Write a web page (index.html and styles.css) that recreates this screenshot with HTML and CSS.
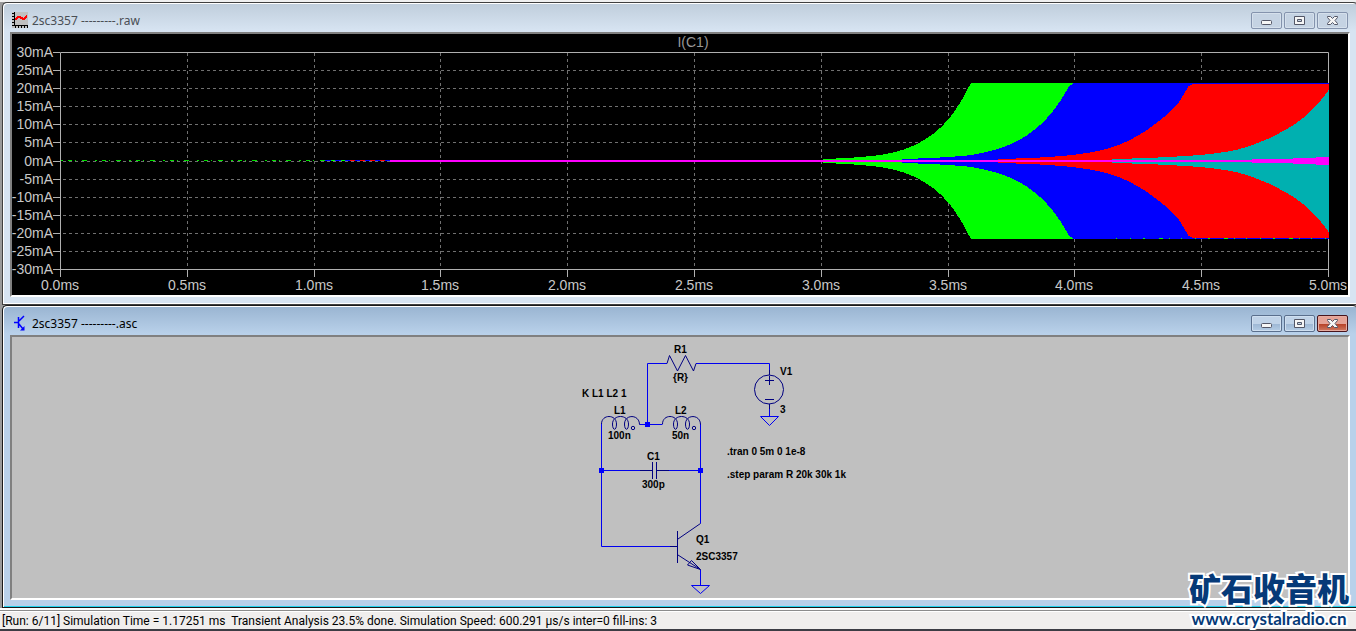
FILE: index.html
```html
<!DOCTYPE html>
<html lang="en">
<head>
<meta charset="utf-8">
<title>2sc3357</title>
<link rel="stylesheet" href="styles.css">
</head>
<body>
<main class="workspace">
  <section class="window window-inactive">
    <header class="titlebar">
      <svg class="doc-icon" width="16" height="16" viewBox="0 0 16 16" aria-hidden="true" shape-rendering="crispEdges">
        <rect width="16" height="16" fill="#c0c0c0"/>
        <path d="M2 0H3V14H2zM2 13H16V14H2zM0 1H2V2H0zM0 4H2V5H0zM0 7H2V8H0zM0 10H2V11H0zM0 13H2V14H0zM3 14H4V16H3zM6 14H7V16H6zM9 14H10V16H9zM12 14H13V16H12zM15 14H16V16H15z" fill="#000"/>
        <path d="M3 8L6 5H8L11 7H12L15 3.500" fill="none" stroke="#f00" stroke-width="2"/>
      </svg>
      <h1 class="title">2sc3357 ---------.raw</h1>
      <div class="controls">
        <button class="control" aria-label="Minimize"><svg width="13" height="11" viewBox="0 0 13 11"><rect x="1.500" y="5.500" width="10" height="4" rx="1" class="glyph"/></svg></button>
        <button class="control" aria-label="Maximize"><svg width="13" height="11" viewBox="0 0 13 11"><path fill-rule="evenodd" d="M1.500 1.500h10v8h-10zM4.500 4.500v2h4v-2z" class="glyph"/></svg></button>
        <button class="control" aria-label="Close"><svg width="13" height="11" viewBox="0 0 13 11"><path d="M1.500 1.500h3l2 2 2-2h3v1L9 5.500l2.500 3v1h-3l-2-2-2 2h-3v-1l2.500-3-2.500-3z" class="glyph"/></svg></button>
      </div>
    </header>
    <div class="viewport">
      <svg class="drawing plot" id="plot" viewBox="12 34 1336 261" role="img" aria-label="I(C1)">
        <g id="grid" class="grid"></g>
        <g id="axes" class="axes"></g>
        <g id="traces" shape-rendering="crispEdges"></g>
        <g id="labels" class="labels"><text x="693" y="47" text-anchor="middle" class="trace-name">I(C1)</text></g>
      </svg>
    </div>
  </section>

  <section class="window window-active">
    <header class="titlebar">
      <svg class="doc-icon" width="16" height="16" viewBox="0 0 16 16" aria-hidden="true">
        <path d="M2 7.500H6M6.500 2V13M7 6L12 1M7 9L11 14" fill="none" stroke="#00f" stroke-width="1.500"/>
        <path d="M12.500 11V15.500H8z" fill="#00f"/>
      </svg>
      <h1 class="title">2sc3357 ---------.asc</h1>
      <div class="controls">
        <button class="control" aria-label="Minimize"><svg width="13" height="11" viewBox="0 0 13 11"><rect x="1.500" y="5.500" width="10" height="4" rx="1" class="glyph"/></svg></button>
        <button class="control" aria-label="Maximize"><svg width="13" height="11" viewBox="0 0 13 11"><path fill-rule="evenodd" d="M1.500 1.500h10v8h-10zM4.500 4.500v2h4v-2z" class="glyph"/></svg></button>
        <button class="control control-close" aria-label="Close"><svg width="13" height="11" viewBox="0 0 13 11"><path d="M1.500 1.500h3l2 2 2-2h3v1L9 5.500l2.500 3v1h-3l-2-2-2 2h-3v-1l2.500-3-2.500-3z" class="glyph"/></svg></button>
      </div>
    </header>
    <div class="viewport">
      <svg class="drawing schematic" viewBox="12 337 1336 261" role="img" aria-label="Oscillator schematic">
        <g class="wire">
          <path d="M639.500 424.500H662.500M647.500 424.500V363.500H667M696 363.500H769.500V370M601.500 424V546.500H670M601.500 470.500H640M669 470.500H700.500M700.500 424V523.500M700.500 570V585.500M769.500 409V416.500"/>
          <path d="M760.500 416.500H778.500L769.500 425.500zM691.500 585.500H709.500L700.500 593.500z"/>
        </g>
        <path class="node" d="M645 422h5v5h-5zM599 468h5v5h-5zM698 468h5v5h-5z"/>
        <g class="part">
          <path d="M667 363.500L669.500 355.500L677.500 371L685.500 355.500L693.500 371L696 363.500"/>
          <path d="M601.500 424C601.500 414 616.500 414 616.500 424C616.500 431 612.500 431 612.500 424C612.500 414 628.500 414 628.500 424C628.500 431 624.500 431 624.500 424C624.500 414 639.500 414 639.500 424.500"/>
          <path d="M662.500 424C662.500 414 677.500 414 677.500 424C677.500 431 673.500 431 673.500 424C673.500 414 689.500 414 689.500 424C689.500 431 685.500 431 685.500 424C685.500 414 700.500 414 700.500 424.500"/>
          <circle cx="633" cy="428" r="1.700"/><circle cx="694" cy="428" r="1.700"/>
          <circle cx="769" cy="389.500" r="14.500"/>
          <path d="M769.500 370V375M765 380.500H774M769.500 376V385M765 399.500H774M769.500 404V409"/>
          <path d="M640 470.500H652M652.500 462V479M656.500 462V479M657 470.500H669"/>
          <path d="M670 546.500H677M677.500 531V563M678 539L700.500 523.500M678 555L700.500 569.500L687.500 565L691.500 560.500L700.500 569.500"/>
        </g>
        <g class="notes">
          <text x="674" y="353">R1</text><text x="673" y="381">{R}</text>
          <text x="582" y="397">K L1 L2 1</text>
          <text x="614" y="414">L1</text><text x="608" y="439">100n</text>
          <text x="675" y="414">L2</text><text x="672" y="439">50n</text>
          <text x="780" y="375">V1</text><text x="780" y="413">3</text>
          <text x="647" y="460">C1</text><text x="642" y="488">300p</text>
          <text x="727" y="455">.tran 0 5m 0 1e-8</text>
          <text x="727" y="478">.step param R 20k 30k 1k</text>
          <text x="696" y="543">Q1</text><text x="696" y="560">2SC3357</text>
        </g>
      </svg>
    </div>
  </section>
</main>
<footer class="statusbar">[Run: 6/11] Simulation Time = 1.17251 ms&nbsp; Transient Analysis 23.5% done. Simulation Speed: 600.291 µs/s inter=0 fill-ins: 3</footer>
<div class="watermark">
  <span class="watermark-name" lang="zh">矿石收音机</span>
  <span class="watermark-url">www.crystalradio.cn</span>
</div>
<script src="plot.js"></script>
</body>
</html>
```

FILE: styles.css
```css
* {
  box-sizing: border-box;
}

body {
  margin: 0;
  min-height: 100vh;
  display: flex;
  flex-direction: column;
  position: relative;
  background: #f0eeed;
  font-family: "Noto Sans", "Open Sans", sans-serif;
  font-size: 12px;
}

.workspace {
  padding: 2px 0 0 2px;
  background: linear-gradient(#f0f0f0, #f0f0f0) top / 100% 2px no-repeat #9a9a9a;
}

.window {
  border: 1px solid #404040;
  border-right: 0;
  border-radius: 5px 3px 0 0;
  padding: 1px 6px 7px 7px;
}

.window-inactive {
  background: linear-gradient(#bfcddb, #d7e4f2 28px);
  box-shadow: inset 1px 1px #fff, inset 0 -1px #fff;
}

.window-active {
  border-color: #1a1a1a;
  background: linear-gradient(#99b4d1, #b9d1ea 28px);
  box-shadow: inset 1px 1px #fff, inset 0 -1px #22d3ee;
}

.titlebar {
  height: 28px;
  display: flex;
  align-items: center;
  gap: 4px;
  padding: 4px 2px 0;
}

.doc-icon {
  flex: none;
}

.title {
  margin: 0;
  padding-top: 2px;
  flex: 1;
  font-size: 12px;
  font-weight: 400;
  line-height: 16px;
  color: #000;
}

.window-inactive .title {
  color: #4a4f55;
}

.controls {
  display: flex;
  gap: 2px;
}

.control {
  width: 31px;
  height: 17px;
  padding: 0;
  display: flex;
  align-items: center;
  justify-content: center;
  border: 1px solid #8493ad;
  border-radius: 2px;
  background: #c5d3e3;
  box-shadow: inset 0 0 0 1px #d5e0ec;
}

.window-active .control {
  border-color: #5a6f8d;
  background: linear-gradient(#c0d3e8 50%, #9cb6d3 50%, #b5cde6);
  box-shadow: inset 0 0 0 1px #cfdff0;
}

.window-active .control-close {
  border-color: #47141c;
  background: linear-gradient(#e5a296 50%, #b53c22 50%, #cf7a63);
  box-shadow: inset 0 0 0 1px #e6aba0;
}

.glyph {
  fill: #f6f6f6;
  stroke: #535666;
}

.viewport {
  border: 2px solid;
  border-color: #808080 #fff #fff #808080;
}

.drawing {
  display: block;
  width: 100%;
  height: auto;
}

.plot {
  background: #000;
}

.schematic {
  background: #c0c0c0;
}

.grid {
  stroke: #707070;
  stroke-dasharray: 3 3;
}

.axes {
  fill: none;
  stroke: #b0b0b0;
}

.labels {
  fill: #c8c8c8;
  font-family: "Liberation Sans", Arial, sans-serif;
  font-size: 14px;
}

.trace-name {
  fill: #989898;
}

.wire {
  fill: none;
  stroke: #0000f0;
}

.node {
  fill: #00f;
}

.part {
  fill: none;
  stroke: #000080;
}

.notes {
  fill: #000;
  font-family: "Liberation Sans", Arial, sans-serif;
  font-size: 10px;
  font-weight: 700;
}

.statusbar {
  flex: 1;
  padding: 3px 2px 0;
  font-family: Roboto, "Noto Sans", sans-serif;
  line-height: 16px;
  border-top: 2px solid #fff;
  border-bottom: 2px solid #3c3c44;
  box-shadow: inset 0 1px #8c8c8c, inset 0 2px #fff;
  color: #000;
}

.watermark {
  position: absolute;
  right: 7px;
  bottom: 1px;
  display: flex;
  flex-direction: column;
  align-items: center;
  color: #063a78;
  -webkit-text-stroke: 4px #fff;
  paint-order: stroke fill;
}

.watermark-name {
  font-family: "Noto Sans CJK SC", sans-serif;
  font-size: 32px;
  font-weight: 900;
  line-height: 42px;
}

.watermark-url {
  font-family: Lato, sans-serif;
  font-size: 17px;
  font-weight: 700;
  line-height: 22px;
}
```

FILE: plot.js
```js
const NS = "http://www.w3.org/2000/svg";
const left = 60, right = 1328, top_ = 52, bottom = 269, center = 161;

function add(parent, tag, attrs, text) {
  const el = document.createElementNS(NS, tag);
  for (const key in attrs) el.setAttribute(key, attrs[key]);
  if (text) el.textContent = text;
  document.getElementById(parent).appendChild(el);
}

// Axes, grid lines and their labels
add("axes", "path", { d: `M${left + 0.5} ${bottom + 8}V${top_ + 0.5}H${right + 0.5}V${bottom + 8}M${left} ${bottom + 0.5}H${right}` });
for (let i = 0; i <= 12; i++) {
  const y = Math.round(top_ + (bottom - top_) * i / 12);
  if (i > 0 && i < 12) add("grid", "path", { d: `M${left + 3} ${y + 0.5}H${right}` });
  add("axes", "path", { d: `M53 ${y + 0.5}H${left}` });
  add("labels", "text", { x: 53, y: y + 5, "text-anchor": "end" }, `${30 - 5 * i}mA`);
}
for (let i = 0; i <= 10; i++) {
  const x = Math.round(left + (right - left) * i / 10);
  if (i > 0 && i < 10) {
    add("grid", "path", { d: `M${x + 0.5} ${top_ + 1}V${bottom}` });
    add("axes", "path", { d: `M${x + 0.5} ${bottom}V${bottom + 8}` });
  }
  add("labels", "text", { x: x, y: 290, "text-anchor": "middle" }, `${(i / 2).toFixed(1)}ms`);
}

// Each oscillation envelope grows exponentially between [x, amplitude] samples
const runs = [
  ["#00ff00", [[823, 2], [846, 3], [880, 6], [900, 10.5], [920, 19], [948, 42], [968, 74], [971, 78]]],
  ["#0000ff", [[902, 2], [930, 3], [967, 5.5], [1000, 13], [1033, 30.5], [1050, 47], [1068, 74], [1073, 78]]],
  ["#ff0000", [[998, 2], [1030, 3], [1067, 5.5], [1100, 10.5], [1133, 23], [1153, 36], [1177, 57], [1188, 75], [1192, 77]]],
  ["#00b0b0", [[1112, 2], [1147, 3], [1167, 4], [1200, 6], [1233, 10.5], [1257, 18], [1277, 27], [1300, 41], [1329, 72]]],
  ["#ff00ff", [[390, 1], [1251, 1], [1252, 2], [1292, 2], [1293, 3], [1315, 3], [1316, 4], [1329, 4]]]
];
function amplitude(points, x) {
  for (let i = 1; i < points.length; i++) {
    const [x0, a0] = points[i - 1], [x1, a1] = points[i];
    if (x <= x1) return Math.round(a0 * Math.pow(a1 / a0, (x - x0) / (x1 - x0)));
  }
  return points[points.length - 1][1];
}

// Start-up noise along the zero line
add("traces", "path", { d: "M61 160.500H325", stroke: "#00e000", "stroke-dasharray": "2 5 4 3 1 6 5 8" });
add("traces", "path", { d: "M325 160.500H390", stroke: "#00ff00" });
add("traces", "path", { d: "M325 160.500H390", stroke: "#00f", "stroke-dasharray": "6 4" });
add("traces", "path", { d: "M350 160.500H390", stroke: "#f00", "stroke-dasharray": "5 5" });

for (const [color, points] of runs) {
  let d = "";
  for (let x = points[0][0]; x <= right; x++) {
    const a = amplitude(points, x);
    d += `M${x} ${center - a}h1v${2 * a}h-1z`;
  }
  add("traces", "path", { d, fill: color });
}

add("traces", "path", { d: `M1074 83.500H${right + 1}M1078 238.500H${right + 1}`, stroke: "#0000ff" });
add("traces", "path", { d: `M1116 238.500H${right}`, stroke: "#00ff00", "stroke-dasharray": "1 13 1 12 2 14 4 6 1 11" });
```
